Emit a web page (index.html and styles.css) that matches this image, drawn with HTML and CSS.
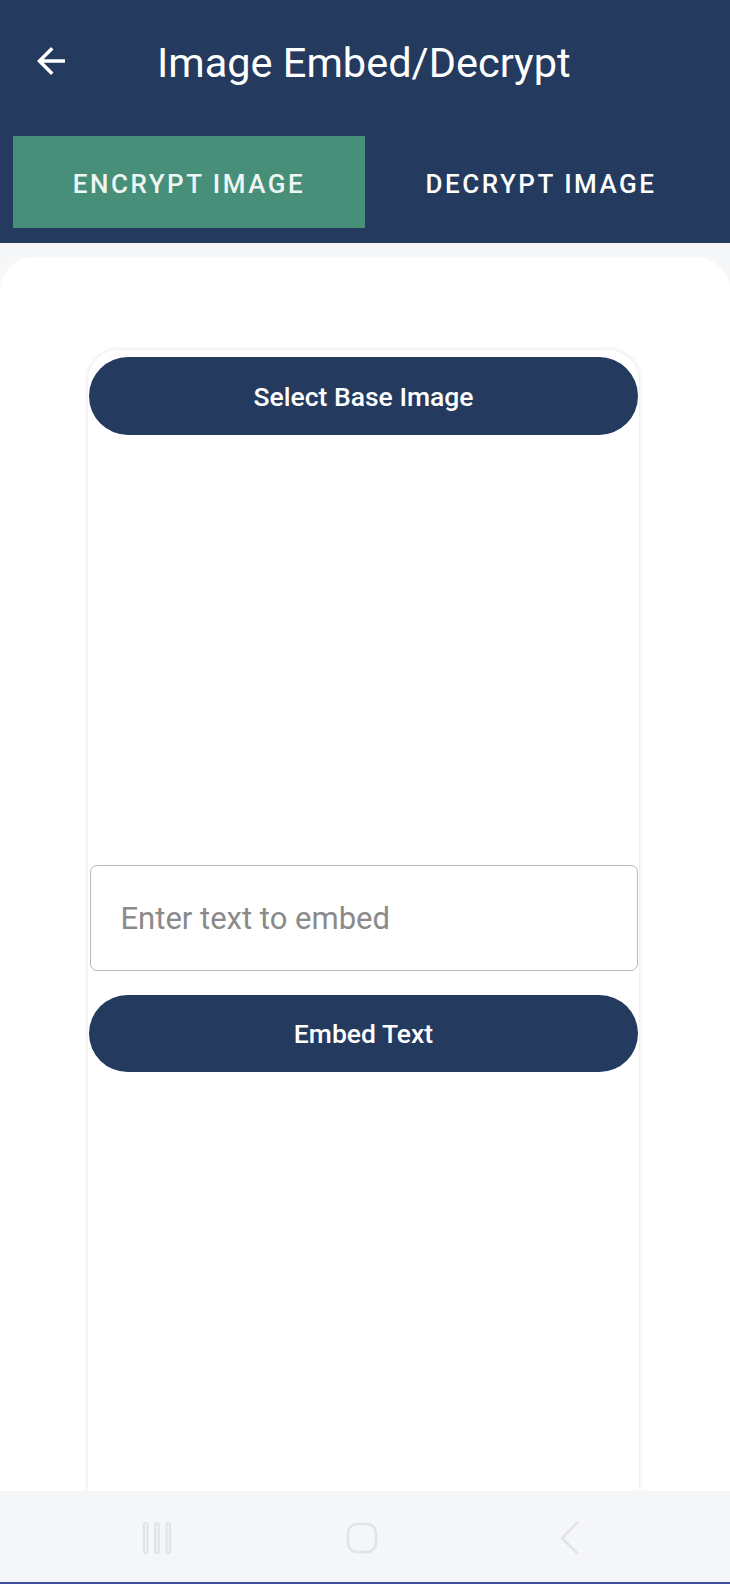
FILE: index.html
```html
<!DOCTYPE html>
<html>
<head>
<meta charset="utf-8">
<link rel="stylesheet" href="styles.css">
</head>
<body>
<div class="app">
  <header class="header">
    <div class="titlebar">
      <svg class="back" viewBox="0 0 24 24" width="42" height="42"><path d="M20 11H7.83l5.59-5.59L12 4l-8 8 8 8 1.41-1.41L7.83 13H20v-2z" fill="#ffffff"/></svg>
      <h1 class="title">Image Embed/Decrypt</h1>
    </div>
    <div class="tabs">
      <div class="tab active">ENCRYPT IMAGE</div>
      <div class="tab">DECRYPT IMAGE</div>
    </div>
  </header>
  <main class="main">
    <div class="sheet">
      <div class="card">
        <button class="pill">Select Base Image</button>
        <input class="field" type="text" placeholder="Enter text to embed">
        <button class="pill embed">Embed Text</button>
      </div>
    </div>
  </main>
  <nav class="navbar">
    <svg width="32" height="34" viewBox="0 0 32 34"><g fill="none" stroke="#e1e3e6" stroke-width="2.2"><rect x="3" y="2" width="3.5" height="30" rx="1.75"/><rect x="14.2" y="2" width="3.5" height="30" rx="1.75"/><rect x="25.5" y="2" width="3.5" height="30" rx="1.75"/></g></svg>
    <svg width="34" height="34" viewBox="0 0 34 34"><rect x="3" y="3" width="28" height="28" rx="9" fill="none" stroke="#e1e3e6" stroke-width="2.6"/></svg>
    <svg width="26" height="34" viewBox="0 0 26 34"><path d="M20 2 L5 17 L20 32" fill="none" stroke="#e1e3e6" stroke-width="2.6" stroke-linecap="round" stroke-linejoin="round"/></svg>
  </nav>
</div>
</body>
</html>
```
FILE: styles.css
```css
* { box-sizing: border-box; }
html, body { margin: 0; padding: 0; }
body {
  width: 730px;
  height: 1584px;
  overflow: hidden;
  font-family: Roboto, "Liberation Sans", Arial, sans-serif;
  background: #f6f7f9;
}
.app {
  display: flex;
  flex-direction: column;
  height: 1584px;
}
.header {
  background: #243a5e;
  height: 243px;
  flex: none;
  padding: 0 13px 15px;
  display: flex;
  flex-direction: column;
}
.titlebar {
  height: 126px;
  display: flex;
  align-items: center;
}
.back {
  margin-left: 17px;
  margin-top: -4px;
  flex: none;
}
.title {
  margin: 0 0 0 85px;
  color: #ffffff;
  font-size: 41.5px;
  font-weight: 400;
  line-height: 48px;
}
.tabs {
  margin-top: 10px;
  height: 92px;
  display: flex;
}
.tab {
  flex: 1;
  display: flex;
  align-items: center;
  justify-content: center;
  padding-top: 4px;
  color: #ffffff;
  font-size: 26px;
  font-weight: 500;
  letter-spacing: 2.5px;
}
.tab.active {
  background: #478f79;
  color: #eef6f3;
}
.main {
  flex: 1;
  overflow: hidden;
  display: flex;
  flex-direction: column;
  padding-top: 14px;
  background: #f6f7f9;
}
.sheet {
  flex: 1;
  background: #ffffff;
  border-radius: 34px 34px 0 0;
  padding: 93px 0 0 88px;
  display: flex;
  flex-direction: column;
  align-items: flex-start;
}
.card {
  width: 551px;
  flex: 1;
  background: #ffffff;
  border-radius: 30px 30px 0 0;
  box-shadow: 0 0 5px rgba(0, 0, 0, 0.13);
  padding: 7px 0 0 0;
  display: flex;
  flex-direction: column;
  align-items: center;
}
.pill {
  width: 549px;
  height: 78px;
  border: none;
  border-radius: 39px;
  background: #243a5e;
  color: #ffffff;
  font-family: Roboto, "Liberation Sans", Arial, sans-serif;
  font-size: 26.5px;
  font-weight: 500;
  padding: 0;
  flex: none;
}
.field {
  margin-top: 430px;
  width: 548px;
  height: 106px;
  border: 1.5px solid #b9b9b9;
  border-radius: 7px;
  padding: 0 0 0 30px;
  font-family: Roboto, "Liberation Sans", Arial, sans-serif;
  font-size: 31px;
  color: #333;
  background: #ffffff;
  flex: none;
}
.field::placeholder {
  color: #8a8a8a;
}
.embed {
  margin-top: 24px;
  height: 77px;
}
.navbar {
  flex: none;
  height: 93px;
  background: #f5f6f8;
  border-bottom: 2px solid #3e4fa0;
  display: flex;
  align-items: center;
  padding-top: 2px;
}
.navbar svg:nth-child(1) { margin-left: 141px; }
.navbar svg:nth-child(2) { margin-left: 172px; }
.navbar svg:nth-child(3) { margin-left: 178px; }
```
